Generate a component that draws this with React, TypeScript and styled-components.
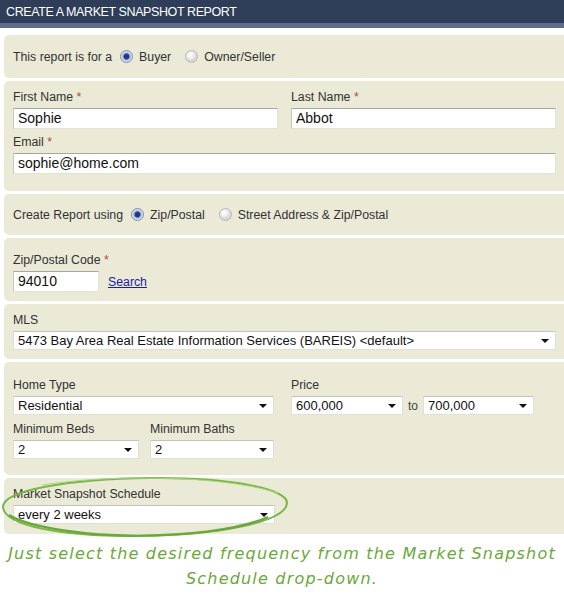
import React from 'react'
import styled, { createGlobalStyle } from 'styled-components'

const Global = createGlobalStyle`
  html, body {
    margin: 0;
    padding: 0;
    background: #ffffff;
  }
`

const Page = styled.div`
  width: 564px;
  height: 607px;
  overflow: hidden;
  background: #ffffff;
  font-family: "Liberation Sans", Arial, sans-serif;
  color: #333333;
`

const TitleBar = styled.div`
  height: 23px;
  background: #2e3e58;
  border-bottom: 5px solid #5d6c8d;
  color: #ffffff;
  font-size: 12.5px;
  letter-spacing: -0.4px;
  line-height: 24px;
  padding-left: 6px;
`

const Form = styled.div`
  display: flex;
  flex-direction: column;
  gap: 3px;
  padding: 7px 0 0 4px;
  margin-right: -6px;
`

const Panel = styled.div<{ $pt?: number; $pb?: number; $h?: number }>`
  position: relative;
  background: #eaead7;
  border-radius: 5px;
  padding: ${p => p.$pt ?? 8}px 14px ${p => p.$pb ?? 8}px 9px;
  ${p => (p.$h ? `height: ${p.$h}px; box-sizing: border-box;` : '')}
`

const InlineRow = styled.div`
  display: flex;
  align-items: center;
  height: 100%;
  font-size: 12.3px;
`

const InlineLabel = styled.span`
  margin-right: 8px;
`

const RadioOption = styled.label`
  display: flex;
  align-items: center;
  gap: 6px;
  margin-right: 14px;
`

const RadioDot = styled.span<{ $on?: boolean }>`
  width: 11px;
  height: 11px;
  border-radius: 50%;
  border: 1px solid ${p => (p.$on ? '#7e8aa8' : '#b9b9b9')};
  background: ${p =>
    p.$on
      ? 'radial-gradient(circle at 50% 50%, #1f2f6a 0, #2c3f86 2.5px, #9fb3e0 3.5px, #e8eef9 5.5px)'
      : 'radial-gradient(circle at 40% 35%, #ffffff 0, #f1f1f1 3px, #d6d6d6 6px)'};
`

const Grid = styled.div<{ $cols: string; $gap?: number }>`
  display: grid;
  grid-template-columns: ${p => p.$cols};
  column-gap: ${p => p.$gap ?? 13}px;
  align-items: end;
`

const Field = styled.div<{ $mt?: number; $top?: boolean }>`
  display: flex;
  flex-direction: column;
  margin-top: ${p => p.$mt ?? 0}px;
  ${p => (p.$top ? 'align-self: start;' : '')}
`

const Label = styled.div`
  font-size: 12.3px;
  line-height: 16px;
  margin-bottom: 3px;
  white-space: nowrap;
`

const Req = styled.span`
  color: #b5482c;
`

const TextInput = styled.div<{ $w?: number }>`
  box-sizing: border-box;
  height: 21px;
  ${p => (p.$w ? `width: ${p.$w}px;` : 'width: 100%;')}
  background: #ffffff;
  border: 1px solid #e2e2d6;
  border-top-color: #a8a8a0;
  border-left-color: #c8c8be;
  font-size: 14px;
  color: #111111;
  line-height: 19px;
  padding-left: 4px;
`

const SelectBox = styled.div<{ $w?: number }>`
  box-sizing: border-box;
  height: 19px;
  ${p => (p.$w ? `width: ${p.$w}px;` : 'width: 100%;')}
  display: flex;
  align-items: center;
  justify-content: space-between;
  background: #ffffff;
  border: 1px solid #e0e0d4;
  border-top-color: #c4c4ba;
  font-size: 13px;
  color: #111111;
  padding: 0 6px 0 4px;
  white-space: nowrap;
`

const Arrow = styled.span`
  width: 0;
  height: 0;
  border-left: 4px solid transparent;
  border-right: 4px solid transparent;
  border-top: 4px solid #111111;
  flex-shrink: 0;
`

const Row = styled.div<{ $gap?: number }>`
  display: flex;
  align-items: center;
  gap: ${p => p.$gap ?? 8}px;
`

const SearchLink = styled.a`
  color: #1c1ca8;
  text-decoration: underline;
  font-size: 12.3px;
`

const ToText = styled.span`
  font-size: 12px;
  color: #444444;
`

const Circle = styled.svg`
  position: absolute;
  left: -2px;
  top: -3px;
  pointer-events: none;
  overflow: visible;
`

const Caption = styled.div`
  margin-top: 7px;
  padding: 0 2px;
  text-align: center;
  font-family: "DejaVu Sans", sans-serif;
  font-style: italic;
  font-size: 16px;
  line-height: 25px;
  letter-spacing: 1.2px;
  white-space: nowrap;
  color: #6aa93a;
`

const Select = ({ value, w }: { value: string; w?: number }) => (
  <SelectBox $w={w}>
    <span>{value}</span>
    <Arrow />
  </SelectBox>
)

const Radio = ({ on, children }: { on?: boolean; children: React.ReactNode }) => (
  <RadioOption>
    <RadioDot $on={on} />
    {children}
  </RadioOption>
)

export default function App() {
  return (
    <Page>
      <Global />
      <TitleBar>CREATE A MARKET SNAPSHOT REPORT</TitleBar>
      <Form>
        <Panel $h={43} $pt={0} $pb={0}>
          <InlineRow>
            <InlineLabel>This report is for a</InlineLabel>
            <Radio on>Buyer</Radio>
            <Radio>Owner/Seller</Radio>
          </InlineRow>
        </Panel>

        <Panel $pt={8} $pb={17}>
          <Grid $cols="265px 265px">
            <Field>
              <Label>First Name <Req>*</Req></Label>
              <TextInput>Sophie</TextInput>
            </Field>
            <Field>
              <Label>Last Name <Req>*</Req></Label>
              <TextInput>Abbot</TextInput>
            </Field>
          </Grid>
          <Field $mt={5}>
            <Label>Email <Req>*</Req></Label>
            <TextInput>sophie@home.com</TextInput>
          </Field>
        </Panel>

        <Panel $h={41} $pt={0} $pb={0}>
          <InlineRow>
            <InlineLabel>Create Report using</InlineLabel>
            <Radio on>Zip/Postal</Radio>
            <Radio>Street Address &amp; Zip/Postal</Radio>
          </InlineRow>
        </Panel>

        <Panel $pt={14} $pb={9}>
          <Field>
            <Label>Zip/Postal Code <Req>*</Req></Label>
            <Row $gap={9}>
              <TextInput $w={86}>94010</TextInput>
              <SearchLink href="#">Search</SearchLink>
            </Row>
          </Field>
        </Panel>

        <Panel $pt={8} $pb={9}>
          <Field>
            <Label>MLS</Label>
            <Select value="5473 Bay Area Real Estate Information Services (BAREIS) <default>" />
          </Field>
        </Panel>

        <Panel $pt={15} $pb={16}>
          <Grid $cols="261px auto" $gap={17}>
            <div>
              <Field>
                <Label>Home Type</Label>
                <Select value="Residential" />
              </Field>
              <Grid $cols="126px 124px" $gap={11}>
                <Field $mt={6}>
                  <Label>Minimum Beds</Label>
                  <Select value="2" />
                </Field>
                <Field $mt={6}>
                  <Label>Minimum Baths</Label>
                  <Select value="2" />
                </Field>
              </Grid>
            </div>
            <Field $top>
              <Label>Price</Label>
              <Row $gap={5}>
                <Select value="600,000" w={112} />
                <ToText>to</ToText>
                <Select value="700,000" w={111} />
              </Row>
            </Field>
          </Grid>
        </Panel>

        <Panel $pt={8} $pb={10}>
          <Field>
            <Label>Market Snapshot Schedule</Label>
            <Select value="every 2 weeks" w={262} />
          </Field>
          <Circle width="286" height="64" viewBox="0 0 286 64">
            <path
              d="M148 3 C 228 2, 286 14, 285 28 C 284 47, 216 60, 138 61 C 58 62, 2 50, 1 32 C 1 15, 68 4, 148 3"
              fill="none"
              stroke="#79b648"
              strokeWidth="2"
            />
            <path
              d="M266 42 C 236 55, 188 60, 138 60.5 C 88 61, 28 53, 7 40"
              fill="none"
              stroke="#6aa83a"
              strokeWidth="2.2"
            />
            <path
              d="M40 10 C 80 4, 120 2.5, 148 3.2 C 198 3, 248 9, 276 18"
              fill="none"
              stroke="#a9d67f"
              strokeWidth="1"
            />
          </Circle>
        </Panel>
      </Form>
      <Caption>
        Just select the desired frequency from the Market Snapshot
        <br />
        Schedule drop-down.
      </Caption>
    </Page>
  )
}
